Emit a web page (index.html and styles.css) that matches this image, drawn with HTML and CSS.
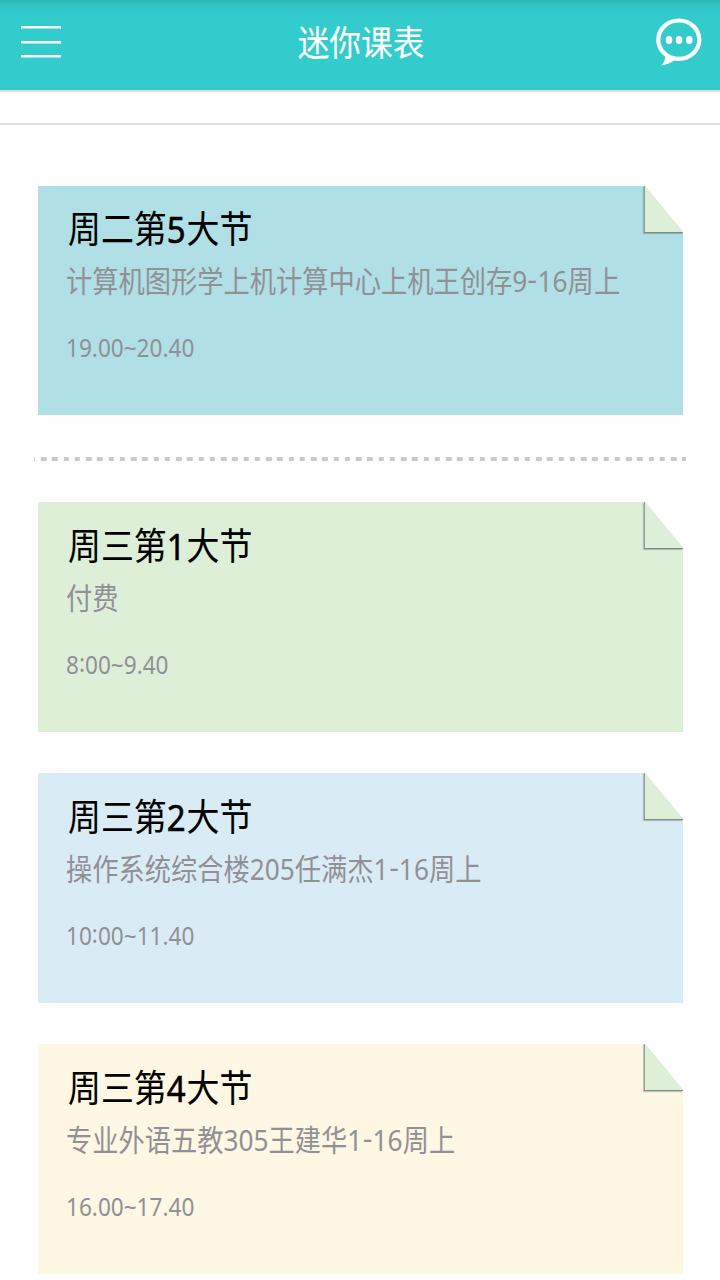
FILE: index.html
```html
<!DOCTYPE html>
<html lang="zh-CN">
<head>
    <meta charset="UTF-8">
    <title>迷你课表</title>
    <link rel="stylesheet" href="styles.css">
</head>
<body>
    <header class="header">
        <div class="menu">
            <span></span>
            <span></span>
            <span></span>
        </div>
        <h1><span class="text">迷你课表</span></h1>
        <svg class="chat" width="46" height="48" viewBox="0 0 46 48">
            <ellipse cx="22.8" cy="21.7" rx="20.5" ry="19.2" fill="none" stroke="#fff" stroke-width="4.2"/>
            <path d="M9 36 Q10 42 5.500 47.500 Q14 46 19.500 41.500 Z" fill="#fff"/>
            <ellipse cx="13" cy="21.900" rx="3.300" ry="4" fill="#fff"/>
            <ellipse cx="23" cy="21.900" rx="3.300" ry="4" fill="#fff"/>
            <ellipse cx="33.300" cy="21.900" rx="3.300" ry="4" fill="#fff"/>
        </svg>
    </header>
    <div class="line"></div>

    <main class="list">
        <div class="card cyan">
            <div class="fold"></div>
            <h2><span class="text">周二第<em>5</em>大节</span></h2>
            <p class="info"><span class="text">计算机图形学上机计算中心上机王创存9<i>-</i>16周上</span></p>
            <p class="time"><span class="text">19.00~20.40</span></p>
        </div>
        <div class="dots"></div>
        <div class="card green">
            <div class="fold"></div>
            <h2><span class="text">周三第<em>1</em>大节</span></h2>
            <p class="info"><span class="text">付费</span></p>
            <p class="time"><span class="text">8<b>:</b>00~9.40</span></p>
        </div>
        <div class="card blue">
            <div class="fold"></div>
            <h2><span class="text">周三第<em>2</em>大节</span></h2>
            <p class="info"><span class="text">操作系统综合楼205任满杰1<i>-</i>16周上</span></p>
            <p class="time"><span class="text">10<b>:</b>00~11.40</span></p>
        </div>
        <div class="card yellow">
            <div class="fold"></div>
            <h2><span class="text">周三第<em>4</em>大节</span></h2>
            <p class="info"><span class="text">专业外语五教305王建华1<i>-</i>16周上</span></p>
            <p class="time"><span class="text">16.00~17.40</span></p>
        </div>
    </main>
</body>
</html>
```
FILE: styles.css
```css
* {
    box-sizing: border-box;
}
body {
    margin: 0;
    height: 1280px;
    overflow: hidden;
    background: #fefefe;
    font-family: "Noto Sans", "Noto Sans CJK SC", sans-serif;
}
h1, h2, p {
    margin: 0;
    font-weight: normal;
    white-space: nowrap;
}
/* narrow glyphs */
.text {
    display: inline-block;
    transform: scaleX(0.89);
    transform-origin: left center;
}
.header {
    display: flex;
    justify-content: space-between;
    height: 92px;
    padding: 0 18px 0 21px;
    background: linear-gradient(#2db5b5, #32c5c5 5px, #33cccc 16px);
    border-bottom: 2px solid #e6dada;
}
.menu {
    display: flex;
    flex-direction: column;
    gap: 12px;
    width: 45px;
    padding-top: 26px;
}
.menu span {
    width: 40px;
    height: 3px;
    margin-bottom: -0.5px;
    background: linear-gradient(#fff 2px, #99e5e5 2px);
}
.header h1 {
    color: #fff;
    font-size: 35px;
    line-height: 50px;
    padding-top: 18px;
    -webkit-text-stroke: 0.1px #fff;
}
.header .text {
    transform: scaleX(0.905);
    transform-origin: center;
}
.chat {
    margin-top: 18px;
}
.line {
    height: 2px;
    margin-top: 31px;
    background: #e0e0e0;
}
.list {
    padding: 60.5px 37.5px 0;
}
.card {
    position: relative;
    height: 229.5px;
    margin-bottom: 41.5px;
    padding: 18.5px 0 0 28.5px;
}
.cyan {
    background: #b0dfe5;
    margin-bottom: 0;
}
.green {
    background: #deefd8;
}
.blue {
    background: #d9ecf6;
}
.yellow {
    background: #fdf7e3;
}
.fold {
    position: absolute;
    top: 0;
    right: 0;
    width: 39px;
    height: 47px;
    background: linear-gradient(to top right, #deefd8 50%, #fefefe 51%);
    border-left: 1px solid #8fa095;
    border-bottom: 1px solid #7d8c83;
    box-shadow: -1px 1px 1px rgba(0, 0, 0, 0.2);
}
.card h2 {
    color: #000;
    font-size: 37px;
    line-height: 50px;
    padding-left: 1.5px;
    -webkit-text-stroke: 0.1px #000;
}
.card h2 em {
    font-style: normal;
    letter-spacing: 1px;
    -webkit-text-stroke: 0.6px #000;
}
.info {
    color: #919095;
    font-size: 29.5px;
    line-height: 40px;
    padding-top: 7px;
}
.info i {
    display: inline-block;
    width: 11.5px;
    text-align: center;
    transform: translateY(-2px) scaleX(1.15);
    font-style: normal;
}
.time {
    color: #919095;
    font-size: 25px;
    line-height: 34px;
    padding-top: 29px;
}
.time .text {
    transform: scaleX(0.903);
}
.time b {
    display: inline-block;
    font-weight: normal;
    transform: translateY(-2px);
}
.dots {
    height: 4px;
    margin: 42px -3.5px 41px;
    background: repeating-linear-gradient(to right, #cacaca 0 5.5px, transparent 5.5px 11.25px) -4.2px 0;
}
```
